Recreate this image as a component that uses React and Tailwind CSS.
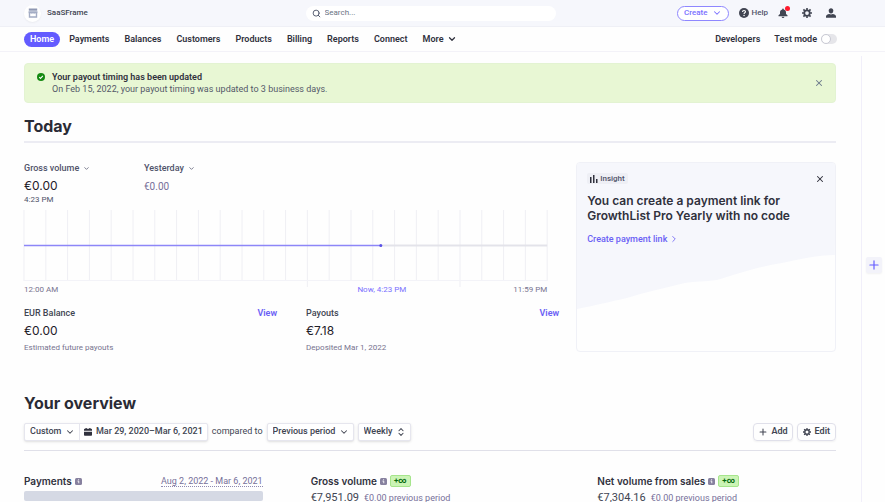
import { useState } from "react";
import { ChevronDown, ChevronRight, ChevronsUpDown, Plus, Search, X } from "lucide-react";

const navItems = ["Payments", "Balances", "Customers", "Products", "Billing", "Reports", "Connect"];

const hours = Array.from({ length: 25 }, (_, i) => i);
const longTicks = [13, 20];

function StoreIcon() {
    return (
        <svg viewBox="0 0 10 10" className="size-[10px]" fill="none">
            <path d="M0.8 0.500h8.400v2.200H.8z" fill="#8f98b3" />
            <path d="M0.5 3.2h9v1.3a1.4 1.4 0 0 1-2.2.7 1.8 1.8 0 0 1-2.3 0 1.8 1.8 0 0 1-2.3 0A1.4 1.4 0 0 1 .5 4.500z" fill="#a3acc4" />
            <path d="M1.500 4.500v4.500h7V4.500" stroke="#a3acc4" strokeWidth="1.400" />
        </svg>
    );
}

function HelpIcon() {
    return (
        <svg viewBox="0 0 16 16" className="size-[10px]" fill="none">
            <circle cx="8" cy="8" r="8" fill="#414552" />
            <path d="M5.600 6.300c0-1.500 1-2.400 2.400-2.400s2.400.9 2.400 2.100c0 1.700-2.300 1.700-2.300 3.400" stroke="#fff" strokeWidth="1.800" />
            <circle cx="8.100" cy="11.900" r="1.200" fill="#fff" />
        </svg>
    );
}

function BellIcon() {
    return (
        <svg viewBox="0 0 16 16" className="size-[10px]" fill="#414552">
            <path d="M8 0.800a1.200 1.200 0 0 0-1.200 1.200v.5C4.500 3 3.200 4.800 3.200 7v2.500L.8 11.700V13h14.400v-1.300l-2.400-2.200V7c0-2.200-1.300-4-3.600-4.500V2A1.200 1.200 0 0 0 8 .8z" />
            <path d="M5.800 14h4.400a2.200 2 0 0 1-4.400 0z" />
        </svg>
    );
}

function GearIcon({ className }) {
    return (
        <svg viewBox="0 0 16 16" className={className} fill="none" stroke="#414552">
            <circle cx="8" cy="8" r="4.400" strokeWidth="2.800" />
            <path
                d="M8 0v3M8 13v3M0 8h3M13 8h3M2.300 2.300l2.200 2.200M11.500 11.500l2.200 2.200M2.300 13.700l2.200-2.200M11.500 4.500l2.200-2.200"
                strokeWidth="2.600"
            />
        </svg>
    );
}

function PersonIcon() {
    return (
        <svg viewBox="0 0 16 16" className="size-[10px]" fill="#414552">
            <path d="M8 0.500c2.300 0 3.700 1.600 3.700 3.800S10.200 8.800 8 8.800 4.300 6.500 4.300 4.300 5.700.5 8 .5z" />
            <path d="M0 15.500v-2.200c0-2 2.800-3.400 5.200-3.900.8.500 1.800.8 2.800.8s2-.3 2.800-.8c2.400.5 5.200 1.900 5.200 3.900v2.200z" />
        </svg>
    );
}

function CalendarIcon() {
    return (
        <svg viewBox="0 0 16 16" className="size-2" fill="#30313d">
            <path d="M3 0h2.500v1.500h5V0H13v1.500h1.500A1.500 1.500 0 0 1 16 3v2.500H0V3a1.500 1.500 0 0 1 1.500-1.500H3z" />
            <path d="M0 7.500h16V14a1.500 1.500 0 0 1-1.500 1.500h-13A1.500 1.500 0 0 1 0 14z" />
        </svg>
    );
}

function InfoIcon() {
    return (
        <svg viewBox="0 0 14 14" className="size-[7px] shrink-0" fill="none">
            <rect width="14" height="14" rx="3" fill="#87819f" />
            <path d="M5 6.200h2.500v4.300M7.200 2.500v2" stroke="#fff" strokeWidth="1.800" />
        </svg>
    );
}

function Header() {
    return (
        <header className="flex h-[27px] shrink-0 items-center border-b border-[#eff0f6] bg-[#f6f7fc] pr-12 pl-6">
            <div className="flex flex-1 items-center gap-1.5">
                <span className="flex size-[17px] items-center justify-center rounded-full bg-white shadow-xs">
                    <StoreIcon />
                </span>
                <span className="text-[8px] leading-[10px] font-medium text-[#414552]">SaaSFrame</span>
            </div>

            <label className="flex h-[15px] w-[250px] items-center gap-1 rounded-full bg-white px-1.5">
                <Search className="size-[9px] text-[#4f566b]" strokeWidth={2.5} />
                <input
                    type="text"
                    aria-label="Search"
                    placeholder="Search..."
                    className="min-w-0 flex-1 text-[8px] leading-3 outline-none placeholder:text-[#6a7383]"
                />
            </label>

            <div className="flex flex-1 items-center justify-end">
                <button className="mr-2.5 flex h-[15px] items-center gap-1 rounded-full border border-[#8f87ff] bg-white px-1.5 text-[8px] font-medium text-[#7a70ff]">
                    Create
                    <ChevronDown className="size-[10px]" strokeWidth={2.5} />
                </button>
                <button className="mr-2.5 flex items-center gap-[3px] text-[8px] font-medium text-[#50546a]">
                    <HelpIcon />
                    Help
                </button>
                <button aria-label="Notifications" className="relative mr-3.5">
                    <BellIcon />
                    <span className="absolute -top-0.5 -right-0.5 size-[5px] rounded-full bg-[#ff1b2d]" />
                </button>
                <button aria-label="Settings" className="mr-3.5">
                    <GearIcon className="size-[10px]" />
                </button>
                <button aria-label="Account" className="mr-px">
                    <PersonIcon />
                </button>
            </div>
        </header>
    );
}

function Nav({ testMode, setTestMode }) {
    return (
        <nav className="flex h-[25px] shrink-0 items-center gap-px border-b border-[#f3f2f8] pr-12 pl-6 text-[9px] font-semibold text-[#30313d]">
            <a href="#" aria-current="page" className="mr-px rounded-full bg-[#635bff] px-1.5 leading-[15px] text-white">
                Home
            </a>
            {navItems.map((item) => (
                <a key={item} href="#" className="px-[7px] leading-[15px]">
                    {item}
                </a>
            ))}
            <button className="flex items-center gap-1 px-[7px] leading-[15px]">
                More
                <ChevronDown className="size-[10px]" strokeWidth={3} />
            </button>

            <div className="ml-auto flex items-center gap-3.5 leading-[15px]">
                <a href="#">Developers</a>
                <label className="flex items-center gap-1">
                    Test mode
                    <input
                        type="checkbox"
                        role="switch"
                        checked={testMode}
                        onChange={(e) => setTestMode(e.target.checked)}
                        className="h-[10px] w-4 appearance-none rounded-full bg-[#e6e6ea] before:block before:size-[10px] before:rounded-full before:border before:border-[#c9cad4] before:bg-white checked:bg-[#635bff] checked:before:ml-1.5"
                    />
                </label>
            </div>
        </nav>
    );
}

function Banner({ onClose }) {
    return (
        <div className="flex items-center rounded border border-[#e3f3d2] bg-[#e8f7d4] py-[7px] pr-[11px] pl-3 text-[9px] leading-3">
            <svg viewBox="0 0 16 16" className="mt-0.5 mr-[7px] size-2 self-start" fill="none">
                <circle cx="8" cy="8" r="8" fill="#158a12" />
                <path d="M4.500 8.200l2.500 2.500 4.700-5" stroke="#fff" strokeWidth="2.200" />
            </svg>
            <div className="flex-1">
                <p className="font-semibold text-[#30313d]">Your payout timing has been updated</p>
                <p className="text-[#545969]">On Feb 15, 2022, your payout timing was updated to 3 business days.</p>
            </div>
            <button aria-label="Dismiss" onClick={onClose}>
                <X className="size-[10px]" color="#6c7a8c" strokeWidth={2.5} />
            </button>
        </div>
    );
}

function VolumeChart() {
    return (
        <svg className="h-[78px] w-full overflow-visible" aria-label="Gross volume today" role="img">
            {hours.map((h) => (
                <line
                    key={h}
                    x1={`${(h / 24) * 100}%`}
                    x2={`${(h / 24) * 100}%`}
                    y1="0"
                    y2={longTicks.includes(h) ? 77 : 71}
                    stroke="#efeff4"
                />
            ))}
            <line x1="0" x2="100%" y1="70.5" y2="70.5" stroke="#f3f3f8" />
            <line x1="68%" x2="100%" y1="35.5" y2="35.5" stroke="#e3e3ea" strokeWidth="2" />
            <line x1="0" x2="68.200%" y1="35.5" y2="35.5" stroke="#8d86f8" strokeWidth="1.500" />
            <circle cx="68.200%" cy="35.5" r="1.500" fill="#5a51e6" />
        </svg>
    );
}

function Balance({ title, amount, note }) {
    return (
        <div className="flex-1">
            <div className="flex justify-between text-[9px] leading-3 font-medium">
                <h3 className="text-[#414552]">{title}</h3>
                <a href="#" className="font-semibold text-[#6a5ff5]">View</a>
            </div>
            <p className="mt-1 font-['Inter',sans-serif] text-[12px] leading-4 text-[#1f2029]">{amount}</p>
            <p className="mt-[3px] text-[8px] leading-3 text-[#77738f]">{note}</p>
        </div>
    );
}

function Today() {
    return (
        <section className="mt-3">
            <h2 className="border-b-2 border-[#ececf3] pb-1 font-['Inter',sans-serif] text-[16px] leading-[22px] font-bold text-[#2a2b35]">
                Today
            </h2>

            <div className="mt-[19px] flex gap-[17px]">
                <div className="min-w-0 flex-1">
                    <div className="flex text-[9px] leading-3 text-[#50536a]">
                        <div className="w-[120px]">
                            <button className="flex items-center gap-1 font-medium">
                                Gross volume
                                <ChevronDown className="size-[7px]" strokeWidth={2.5} />
                            </button>
                            <p className="mt-1 font-['Inter',sans-serif] text-[12px] leading-4 text-[#1f2029]">€0.00</p>
                            <p className="mt-px text-[8px] leading-[10px]">4:23 PM</p>
                        </div>
                        <div>
                            <button className="flex items-center gap-1 font-medium">
                                Yesterday
                                <ChevronDown className="size-[7px]" strokeWidth={2.5} />
                            </button>
                            <p className="mt-[5px] text-[10px] leading-4 text-[#77709a]">€0.00</p>
                        </div>
                    </div>

                    <div className="mt-[5px] pr-3">
                        <VolumeChart />
                        <div className="-mt-[3px] grid grid-cols-3 text-[8px] leading-[10px] text-[#77738f]">
                            <span>12:00 AM</span>
                            <span className="pl-[159px] whitespace-nowrap text-[#7a70ff]">Now, 4:23 PM</span>
                            <span className="text-right">11:59 PM</span>
                        </div>
                    </div>

                    <div className="mt-3 flex gap-[29px]">
                        <Balance title="EUR Balance" amount="€0.00" note="Estimated future payouts" />
                        <Balance title="Payouts" amount="€7.18" note="Deposited Mar 1, 2022" />
                    </div>
                </div>

                <InsightCard />
            </div>
        </section>
    );
}

function InsightCard() {
    return (
        <aside className="flex h-[190px] w-[32%] shrink-0 flex-col overflow-hidden rounded border border-[#f0f1f7]">
            <div className="bg-[#f6f7fc] px-2.5 pt-2.5">
                <div className="flex items-center justify-between">
                    <span className="flex items-center gap-0.5 rounded-xs bg-[#eeeff5] px-[3px] text-[8px] leading-[11px] font-medium text-[#50536a]">
                        <svg viewBox="0 0 8 8" className="size-2" fill="#30313d">
                            <path d="M0 2h1.500v6H0zM3 0h1.500v8H3zM6 4h1.500v4H6z" />
                        </svg>
                        Insight
                    </span>
                    <button aria-label="Dismiss insight">
                        <X className="size-[10px]" color="#30313d" strokeWidth={2.5} />
                    </button>
                </div>
                <h3 className="mt-[9px] font-['Inter',sans-serif] text-[12px] leading-[15px] font-semibold text-[#30313d]">
                    You can create a payment link for
                    <br />
                    GrowthList Pro Yearly with no code
                </h3>
                <a href="#" className="mt-2.5 flex items-center gap-0.5 text-[9px] leading-3 font-medium text-[#6a5ff5]">
                    Create payment link
                    <ChevronRight className="size-[10px]" strokeWidth={2} />
                </a>
            </div>
            <svg viewBox="0 0 258 64" preserveAspectRatio="none" className="h-16 w-full" fill="#f6f7fc">
                <path d="M0 0H258V10C240 10 225 14 205 18C180 22 158 30 140 35C128 37 118 36 108 38C85 44 68 47 50 53C32 57 20 60 0 64z" />
            </svg>
        </aside>
    );
}

function Select({ value, label, icon: Icon = ChevronDown, className = "" }) {
    return (
        <span className={`relative flex items-center ${className}`}>
            <select aria-label={label} className="h-full appearance-none pr-[17px] pl-[5px] outline-none">
                <option>{value}</option>
            </select>
            <Icon className="pointer-events-none absolute right-1 size-[10px]" strokeWidth={2.5} />
        </span>
    );
}

const controlBox = "h-[18px] rounded-xs border border-[#e6e6ee] bg-white shadow-sm";

function Metric({ title, amount }) {
    return (
        <div>
            <div className="flex h-3 items-center gap-[3px]">
                <h3 className="font-['Inter',sans-serif] text-[10px] font-semibold text-[#30313d]">{title}</h3>
                <InfoIcon />
                <span className="rounded-xs border border-[#a6e58c] bg-[#cbf4b5] px-[3px] text-[8px] leading-[10px] font-bold text-[#05690d]">
                    +∞
                </span>
            </div>
            <p className="mt-[3px] flex items-baseline gap-[5px] text-[9px] leading-4 text-[#77709a]">
                <span className="text-[11px] text-[#414552]">{amount}</span>
                €0.00 previous period
            </p>
        </div>
    );
}

function Overview() {
    return (
        <section className="mt-[37px]">
            <h2 className="font-['Inter',sans-serif] text-[16px] leading-6 font-bold text-[#2a2b35]">Your overview</h2>

            <div className="mt-2 flex items-center border-b border-[#e0e0e9] pb-[9px] text-[9px] font-medium text-[#414552]">
                <div className={`flex items-center ${controlBox}`}>
                    <Select value="Custom" label="Date range" className="h-full border-r border-[#e6e6ee]" />
                    <button className="flex items-center gap-1 px-1">
                        <CalendarIcon />
                        Mar 29, 2020–Mar 6, 2021
                    </button>
                </div>
                <span className="mx-1 font-normal">compared to</span>
                <Select value="Previous period" label="Comparison" className={controlBox} />
                <Select value="Weekly" label="Interval" icon={ChevronsUpDown} className={`ml-1 ${controlBox}`} />

                <button className="ml-auto flex h-[18px] items-center gap-[3px] rounded border border-[#e0e0ea] px-1 font-semibold shadow-xs">
                    <Plus className="size-[10px]" strokeWidth={2.5} />
                    Add
                </button>
                <button className="ml-1 flex h-[18px] items-center gap-1 rounded border border-[#e0e0ea] px-[5px] font-semibold shadow-xs">
                    <GearIcon className="size-2" />
                    Edit
                </button>
            </div>

            <div className="mt-6 grid grid-cols-3 gap-12">
                <div>
                    <div className="flex h-3 items-center gap-[3px]">
                        <h3 className="font-['Inter',sans-serif] text-[10px] font-semibold text-[#30313d]">Payments</h3>
                        <InfoIcon />
                        <a href="#" className="ml-auto border-b border-dotted border-[#8f8ab0] text-[9px] leading-[10px] text-[#77709a]">
                            Aug 2, 2022 - Mar 6, 2021
                        </a>
                    </div>
                    <div className="mt-1 h-[10px] rounded-xs bg-[#d5d9e4]" />
                </div>
                <Metric title="Gross volume" amount="€7,951.09" />
                <Metric title="Net volume from sales" amount="€7,304.16" />
            </div>
        </section>
    );
}

export default function App() {
    const [testMode, setTestMode] = useState(false);
    const [showBanner, setShowBanner] = useState(true);

    return (
        <div className="flex h-screen flex-col overflow-hidden bg-[#fefefe] font-['Roboto',sans-serif]">
            <Header />
            <Nav testMode={testMode} setTestMode={setTestMode} />
            <div className="flex min-h-0 flex-1">
                <main className="min-w-0 flex-1 overflow-hidden pt-[11px] pr-[25px] pl-6">
                    {showBanner && <Banner onClose={() => setShowBanner(false)} />}
                    <Today />
                    <Overview />
                </main>

                {/* side rail */}
                <div className="mt-1 flex w-6 shrink-0 items-center justify-center border-l border-[#f1effa]">
                    <button
                        aria-label="Open panel"
                        className="mb-7 flex size-4 items-center justify-center rounded-xs bg-[#f3f3fa] text-[#635bff] shadow-xs"
                    >
                        <Plus className="size-[14px]" strokeWidth={2} />
                    </button>
                </div>
            </div>
        </div>
    );
}
